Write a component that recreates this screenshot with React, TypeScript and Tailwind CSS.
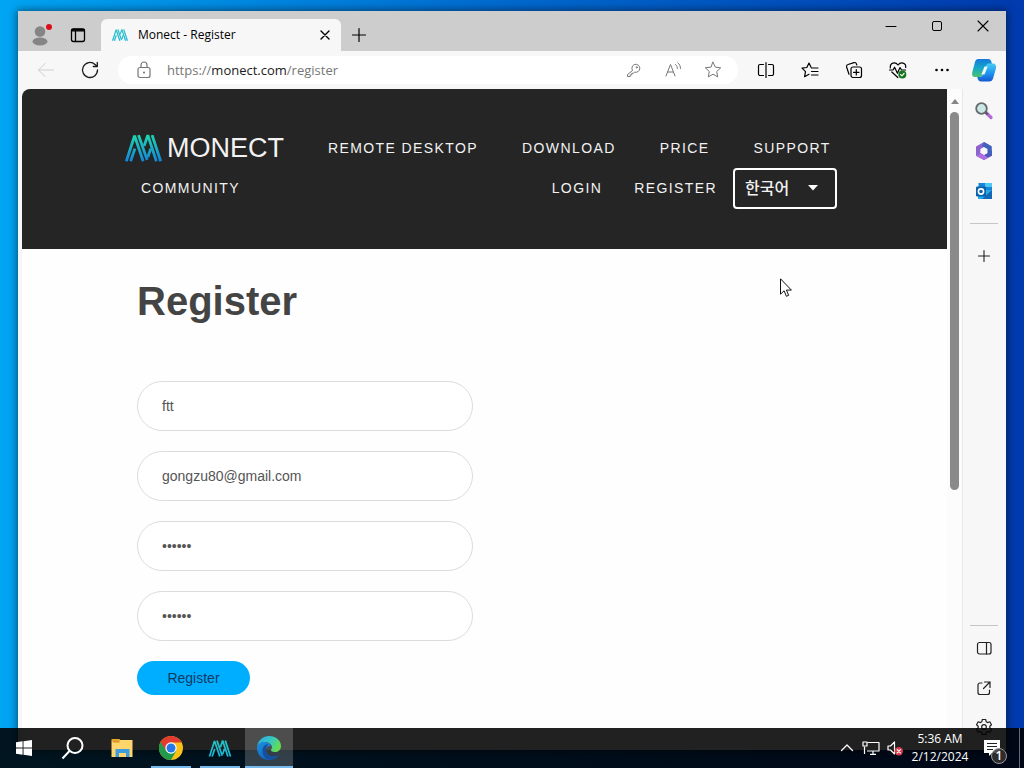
import React from "react";
import type { ReactNode } from "react";

type IconProps = { className?: string };

function MonectMark({ className = "", id, flat = false }: IconProps & { id: string; flat?: boolean }) {
  return (
    <svg viewBox="0 0 112 84" className={className} fill="none" aria-hidden="true">
      <defs>
        <linearGradient id={id} x1="0" y1="0" x2="0" y2="84" gradientUnits="userSpaceOnUse">
          <stop offset="0" stopColor={flat ? "#25c3c9" : "#1fd9ae"} />
          <stop offset="1" stopColor={flat ? "#1cb6d6" : "#1284dc"} />
        </linearGradient>
      </defs>
      <g stroke={`url(#${id})`} strokeWidth="8.5" strokeLinejoin="bevel">
        <path d="M4 82 29 5 55 82" />
        <path d="M17 82 30 44" />
        <path d="M41 3 67 78" />
        <path d="M58 36 69 3 95 82" />
        <path d="M69 70 78 44" />
        <path d="M82 3 108 82" />
      </g>
    </svg>
  );
}

function Line({ className = "", children, width = 1 }: IconProps & { children: ReactNode; width?: number }) {
  return (
    <svg
      viewBox="0 0 20 20"
      className={`size-5 ${className}`}
      fill="none"
      stroke="currentColor"
      strokeWidth={width}
      strokeLinecap="round"
      strokeLinejoin="round"
      aria-hidden="true"
    >
      {children}
    </svg>
  );
}

function IconButton({ label, className = "", children }: { label: string; className?: string; children: ReactNode }) {
  return (
    <button type="button" aria-label={label} className={`flex shrink-0 items-center justify-center ${className}`}>
      {children}
    </button>
  );
}

const plus = <path d="M10 3.5v13M3.5 10h13" />;
const star = "M10 2.2l2.3 4.9 5.4.7-4 3.7 1 5.4-4.7-2.7-4.7 2.7 1-5.4-4-3.7 5.4-.7z";

function TitleBar() {
  return (
    <header className="flex h-10 shrink-0 bg-[#cdcdcd] text-black">
      <div className="flex w-[83px] shrink-0 items-end gap-3 pb-1 pl-3">
        <button type="button" aria-label="Profile" className="size-6">
          <svg viewBox="0 0 24 24" className="size-6" aria-hidden="true">
            <circle cx="10" cy="8.500" r="5.300" fill="#858585" />
            <ellipse cx="10" cy="18.500" rx="7.500" ry="4" fill="#858585" />
            <circle cx="19" cy="4" r="3" fill="#d9101c" />
          </svg>
        </button>
        <IconButton label="Tab actions" className="size-6">
          <Line width={1.3}>
            <rect x="3.500" y="4" width="13" height="12.500" rx="2" />
            <path d="M3.500 5.800h13M7.500 6v10" />
            <path d="M4 4.800h12" strokeWidth="2" />
          </Line>
        </IconButton>
      </div>
      <div className="mt-2 flex w-60 items-center rounded-t-md bg-[#f7f7f7] pr-1.5 pl-[11px]">
        <MonectMark id="tab-mark" flat className="h-3 w-4" />
        <span className="ml-2.5 flex-1 text-xs whitespace-nowrap">Monect - Register</span>
        <IconButton label="Close tab" className="size-5">
          <Line width={1.4}>
            <path d="M6 6l8 8M14 6l-8 8" />
          </Line>
        </IconButton>
      </div>
      <IconButton label="New tab" className="mt-2 w-9">
        <Line width={1.2}>{plus}</Line>
      </IconButton>
      <div className="ml-auto flex h-[30px]">
        <IconButton label="Minimize" className="w-[46px]">
          <Line><path d="M5 10.500h10" /></Line>
        </IconButton>
        <IconButton label="Maximize" className="w-[46px]">
          <Line><rect x="5.500" y="5.500" width="9" height="9" rx="1.500" /></Line>
        </IconButton>
        <IconButton label="Close" className="w-[46px]">
          <Line width={1.1}><path d="M5 5l10 10M15 5L5 15" /></Line>
        </IconButton>
      </div>
    </header>
  );
}

function CopilotIcon() {
  return (
    <svg viewBox="0 0 26 26" className="size-6.5" aria-hidden="true">
      <defs>
        <linearGradient id="cp-a" x1="0" y1="0" x2="0" y2="1">
          <stop offset="0" stopColor="#1577dc" />
          <stop offset=".5" stopColor="#16a8c9" />
          <stop offset="1" stopColor="#4bc26e" />
        </linearGradient>
        <linearGradient id="cp-b" x1="0" y1="0" x2="0" y2="1">
          <stop offset="0" stopColor="#45cdf4" />
          <stop offset=".6" stopColor="#1b8dec" />
          <stop offset="1" stopColor="#1457d0" />
        </linearGradient>
      </defs>
      <path d="M7.500 2h9.500c2.500 0 3.300 1.500 4 5l-5 1-4 9.500c-.700 1.500-1.500 2.500-3.500 2.500H4C1.500 20 .500 18 1.300 15L4 5C4.500 3 5.500 2 7.500 2z" fill="url(#cp-a)" />
      <path d="M17.500 6.500H22c2.500 0 3.600 2 2.900 5L22.200 21c-.600 2.500-2 3.500-4 3.500h-8C8 24.500 7 23 6.200 20h2.500c2 0 2.600-1 3.200-2.500L15.200 8.500c.500-1.300 1-2 2.300-2z" fill="url(#cp-b)" />
      <path d="M13.500 9.500h3.200l-3.200 8h-3.200z" fill="#eefaff" />
    </svg>
  );
}

function Toolbar() {
  return (
    <div className="flex h-[38px] shrink-0 items-center bg-[#f7f7f7] text-[#1b1b1b]">
      <IconButton label="Back" className="ml-1.5 w-11 text-[#cfcfcf]">
        <Line><path d="M17.500 10h-15M9 3.500L2.500 10 9 16.500" /></Line>
      </IconButton>
      <IconButton label="Refresh" className="w-11">
        <Line width={1.3}>
          <path d="M17.500 10a7.500 7.500 0 1 1-2.500-5.600L17 6.300M17.300 2.500v4h-4" />
        </Line>
      </IconButton>
      <div className="ml-1.5 flex h-7 min-w-0 flex-1 items-center rounded-full bg-white text-[#767676]">
        <IconButton label="Site information" className="ml-4 size-5">
          <Line width={1.2}>
            <rect x="4" y="7.500" width="12" height="10" rx="2" />
            <path d="M7 7.500V5a3 3 0 0 1 6 0v2.500" />
            <circle cx="10" cy="12.500" r=".5" fill="currentColor" />
          </Line>
        </IconButton>
        <span className="ml-[13px] flex-1 pt-0.5 text-[13px] whitespace-nowrap">
          https://<span className="text-[#1b1b1b]">monect.com</span>/register
        </span>
        <IconButton label="Password manager" className="w-10">
          <Line>
            <path d="M9.300 10.200a4 4 0 1 1 2.300 1.900l-1.200 1.200H8.800v1.600H7.200v1.600H4.500V15z" />
            <circle cx="13.700" cy="7.300" r=".6" />
          </Line>
        </IconButton>
        <IconButton label="Read aloud" className="w-10">
          <Line>
            <path d="M3 16L7.500 4.500 12 16M4.600 12h5.800M12.500 4.500c1.300 1 1.900 2.500 1.900 4M14.800 2.800c1.800 1.500 2.700 3.500 2.700 5.700" />
          </Line>
        </IconButton>
        <IconButton label="Add to favorites" className="mr-[5px] w-10">
          <Line><path d={star} /></Line>
        </IconButton>
      </div>
      <div className="ml-1.5 flex text-black">
        <IconButton label="Split screen" className="w-11">
          <Line width={1.2}>
            <path d="M7.500 4.500H4A1.500 1.500 0 0 0 2.500 6v8A1.500 1.500 0 0 0 4 15.500h3.500M12.500 4.500H16A1.500 1.500 0 0 1 17.500 6v8a1.500 1.500 0 0 1-1.500 1.500h-3.500M10 2.500v15" />
          </Line>
        </IconButton>
        <IconButton label="Favorites" className="w-11">
          <Line width={1.2}>
            <path d="M11 7.200L9 3 6.800 7.500 2 8.200l3.500 3.500-.9 5L9 14.300M11.500 8h6.500M11.500 11.500h6.500M11.500 15h6.500" />
          </Line>
        </IconButton>
        <IconButton label="Collections" className="w-11">
          <Line width={1.2}>
            <rect x="7" y="7" width="10.500" height="10.500" rx="2" />
            <path d="M12.300 9.500v5.500M9.500 12.300H15M5 14.200L2.600 7A2 2 0 0 1 4 4.500l6-1.900a2 2 0 0 1 2.500 1.400l.3 1" />
          </Line>
        </IconButton>
        <IconButton label="Browser essentials" className="w-11">
          <Line width={1.2}>
            <path d="M2.300 8c-.600-5.500 5-6.500 7.700-3 2.700-3.500 8.300-2.500 7.700 2.500M3.800 12l6 5.500M1.500 10H5l1.600-2.800 2.800 6L12 7.500 13.500 10h4" />
            <circle cx="14.300" cy="14.500" r="4" fill="#16761c" stroke="none" />
            <path d="M12.600 14.600l1.300 1.200 2.200-2.400" stroke="#fff" />
          </Line>
        </IconButton>
        <IconButton label="Settings and more" className="w-11">
          <Line>
            <g fill="currentColor" stroke="none">
              <circle cx="4.500" cy="10" r="1.300" />
              <circle cx="10" cy="10" r="1.300" />
              <circle cx="15.500" cy="10" r="1.300" />
            </g>
          </Line>
        </IconButton>
      </div>
      <IconButton label="Copilot" className="w-[42px] pr-0.5">
        <CopilotIcon />
      </IconButton>
    </div>
  );
}

function SiteHeader() {
  return (
    <div className="h-40 shrink-0 bg-[#252525] px-[103px] pt-[39px] text-[#f2f2f2]">
      <nav aria-label="Main" className="flex max-w-[712px] flex-wrap text-sm tracking-widest whitespace-nowrap">
        <div className="flex h-10 w-full items-center gap-x-11">
          <a href="#home" className="flex items-center gap-[5px] text-[27px] tracking-normal">
            <MonectMark id="site-mark" className="h-7 w-[37px]" />
            MONECT
          </a>
          <a href="#remote">REMOTE DESKTOP</a>
          <a href="#download">DOWNLOAD</a>
          <a href="#price">PRICE</a>
          <a href="#support">SUPPORT</a>
        </div>
        <div className="flex h-10 w-full items-center">
          <a href="#community" className="mr-auto ml-4">COMMUNITY</a>
          <a href="#login" className="mr-8">LOGIN</a>
          <a href="#register" className="mr-4">REGISTER</a>
          <div className="grid h-[41px] w-26 shrink-0 items-center tracking-normal">
            <select
              aria-label="Language"
              className="col-start-1 row-start-1 h-full w-full appearance-none rounded-sm border-2 border-white bg-transparent pt-0.5 pl-2.5 text-base font-medium"
            >
              <option>한국어</option>
            </select>
            <svg viewBox="0 0 12 6" className="pointer-events-none col-start-1 row-start-1 mr-[18px] h-1.5 w-3 justify-self-end" aria-hidden="true">
              <path d="M1 0h10L6 5.500z" fill="#fff" />
            </svg>
          </div>
        </div>
      </nav>
    </div>
  );
}

const fields = [
  { label: "Name", type: "text", value: "ftt" },
  { label: "Email", type: "email", value: "gongzu80@gmail.com" },
  { label: "Password", type: "password", value: "secret" },
  { label: "Confirm password", type: "password", value: "secret" },
];

function RegisterForm() {
  return (
    <main className="px-[115px] pt-7">
      <h1 className="text-[40px] leading-12 font-bold text-[#444]">Register</h1>
      <form className="mt-14 flex max-w-[336px] flex-col items-start gap-5">
        {fields.map((f) => (
          <input
            key={f.label}
            type={f.type}
            aria-label={f.label}
            defaultValue={f.value}
            className="h-[50px] w-full rounded-full border border-[#dcdcdc] bg-white px-6 text-sm text-[#555]"
          />
        ))}
        <button type="button" className="h-[34px] w-[113px] rounded-full bg-[#00aeff] text-sm text-[#123a63]">
          Register
        </button>
      </form>
    </main>
  );
}

function Sidebar() {
  return (
    <aside className="flex w-11 shrink-0 flex-col items-center border-l border-[#e9e9e9] bg-[#f7f7f7] pt-0.5 pr-px text-[#222]">
      <IconButton label="Search" className="h-10 w-full">
        <svg viewBox="0 0 20 20" className="size-5" aria-hidden="true">
          <path d="M12 11.500l5 5" stroke="#b36ad8" strokeWidth="3.200" strokeLinecap="round" />
          <path d="M11 11l2.500 2.500" stroke="#555" strokeWidth="2" />
          <circle cx="7.500" cy="7.500" r="5.300" fill="#cbe7e6" stroke="#656b6c" strokeWidth="1.800" />
        </svg>
      </IconButton>
      <IconButton label="Microsoft 365" className="h-10 w-full">
        <svg viewBox="0 0 20 20" className="size-5" aria-hidden="true">
          <path d="M10 1L17.500 5.300v5L13.500 8 10 6 6.500 8v5L2 14.700V5.500z" fill="#8e62cf" />
          <path d="M2 14.700L7 12l3 2 3.500-2V7.800l4.500 2.400v4.500L10 19z" fill="#4f55bd" />
          <path d="M10 1l7.500 4.300L18 14l-4.500-2V7.800L8 5z" fill="#3e63bd" />
          <path d="M2 14.700L7 12l3.500 2.200L14 16.700 10 19z" fill="#b06ee0" />
          <path d="M10 6.500l3.300 1.800v3.600L10 13.800l-3.300-1.900V8.300z" fill="#f7f7f7" />
        </svg>
      </IconButton>
      <IconButton label="Outlook" className="h-10 w-full">
        <svg viewBox="0 0 20 20" className="size-5" aria-hidden="true">
          <rect x="4.500" y="2" width="13.500" height="8" fill="#1684d8" />
          <rect x="11" y="2" width="7" height="4" fill="#4cc6f5" />
          <path d="M4 9h14v9H4z" fill="#2aa7e8" />
          <path d="M18 9v9H8z" fill="#1268b4" />
          <rect x="2" y="5.500" width="10" height="10" rx="1.200" fill="#0963ac" />
          <circle cx="7" cy="10.500" r="2.600" fill="none" stroke="#fff" strokeWidth="1.600" />
        </svg>
      </IconButton>
      <hr className="mt-3 w-7 border-[#c6c6c6]" />
      <IconButton label="Customize" className="mt-3 h-10 w-full">
        <Line width={1.1}><path d="M10 4.500v11M4.500 10h11" /></Line>
      </IconButton>
      <hr className="mt-auto w-7 border-[#c6c6c6]" />
      <IconButton label="Hide sidebar" className="mt-0.5 h-10 w-full">
        <Line width={1.2}>
          <rect x="3.500" y="4.500" width="13.500" height="11.500" rx="2" />
          <path d="M12.500 4.500V16" />
        </Line>
      </IconButton>
      <IconButton label="Open link" className="h-10 w-full">
        <Line width={1.2}>
          <path d="M8 5H6a2 2 0 0 0-2 2v7.500a2 2 0 0 0 2 2h7.500a2 2 0 0 0 2-2V12M10.500 4H16v5.500M16 4l-6.500 6.500" />
        </Line>
      </IconButton>
      <IconButton label="Settings" className="h-[42px] w-full pb-1">
        <Line width={1.2}>
          <circle cx="10" cy="10" r="2.300" />
          <path d="M8.300 2.500h3.400l.5 2.300 1.300.8 2.300-.8 1.700 3-1.700 1.500v1.500l1.700 1.500-1.700 3-2.300-.8-1.300.8-.5 2.200H8.300l-.5-2.200-1.300-.8-2.300.8-1.700-3 1.700-1.500V9.300L2.500 7.800l1.700-3 2.300.8 1.300-.8z" />
        </Line>
      </IconButton>
    </aside>
  );
}

function TaskButton({ label, className = "w-12 border-transparent", children }: { label: string; className?: string; children: ReactNode }) {
  return (
    <button type="button" aria-label={label} className={`flex items-center justify-center border-b-2 pt-0.5 ${className}`}>
      {children}
    </button>
  );
}

function Taskbar() {
  return (
    <footer className="absolute inset-x-0 bottom-0 flex h-10 bg-black/87 text-white">
      <div className="flex gap-px">
        <TaskButton label="Start">
          <svg viewBox="0 0 16 16" className="size-4" fill="#fff" aria-hidden="true">
            <path d="M0 2.200L6.600 1.300v6.200H0zM7.500 1.200L16 0v7.500H7.500zM0 8.500h6.600v6.200L0 13.800zM7.500 8.500H16V16l-8.500-1.200z" />
          </svg>
        </TaskButton>
        <TaskButton label="Search">
          <svg viewBox="0 0 24 24" className="size-6" fill="none" stroke="#fff" strokeWidth="2" aria-hidden="true">
            <circle cx="14" cy="9.500" r="7.500" />
            <path d="M8.700 14.800L1.500 22.500" />
          </svg>
        </TaskButton>
        <TaskButton label="File Explorer">
          <svg viewBox="0 0 24 24" className="size-6" aria-hidden="true">
            <path d="M1.500 3h8l2 3h-10z" fill="#e8a629" />
            <path d="M1.500 5.500h7l2-1.500h12v17h-21z" fill="#ffd66b" />
            <path d="M3 5h6l1 1.500H3z" fill="#d8922a" />
            <path d="M5.500 13h14v8H16v-4H9v4H5.500z" fill="#3e9bdd" />
          </svg>
        </TaskButton>
        <TaskButton label="Chrome" className="mx-1 w-10 border-[#76b9ed]">
          <svg viewBox="0 0 24 24" className="size-6" aria-hidden="true">
            <circle cx="12" cy="12" r="12" fill="#fbc116" />
            <path d="M12 12L1.600 6A12 12 0 0 0 12 24l5.200-9z" fill="#229a4b" />
            <path d="M12 6.500h10.600L22.400 6A12 12 0 0 0 1.600 6l5.600 9z" fill="#e33b2e" />
            <circle cx="12" cy="12" r="5.700" fill="#fff" />
            <circle cx="12" cy="12" r="4.500" fill="#2878e8" />
          </svg>
        </TaskButton>
        <TaskButton label="Monect" className="mx-1 w-10 border-[#76b9ed]">
          <MonectMark id="task-mark" flat className="h-[17px] w-6" />
        </TaskButton>
        <TaskButton label="Edge" className="w-12 border-[#76b9ed] bg-white/20">
          <svg viewBox="0 0 24 24" className="size-6" aria-hidden="true">
            <defs>
              <linearGradient id="edge-a" x1="0" y1="0" x2="1" y2=".4">
                <stop offset="0" stopColor="#2ba7e3" />
                <stop offset=".6" stopColor="#36c8c5" />
                <stop offset="1" stopColor="#63db52" />
              </linearGradient>
              <linearGradient id="edge-b" x1="0" y1="0" x2=".6" y2="1">
                <stop offset="0" stopColor="#1b91de" />
                <stop offset="1" stopColor="#1360bd" />
              </linearGradient>
            </defs>
            <path d="M0 11C1 4 6 0 12 0c7 0 12 4.500 12 10 0 4-3 6-6 6-3 0-4-1-4-2 0-.700 1-1 1-3C15 8 11 6 7.500 6 3.500 6 1 8.500 0 11z" fill="url(#edge-a)" />
            <path d="M0 12c0-4 4-6.500 8-6 3 .400 6 2 6.500 4.500C13.500 9.500 9 10 9 14.500c0 4 3.500 6 7 6 3 0 4-1 5.500-1.500C19.500 22.500 16 24 12 24 5 24 0 18.500 0 12z" fill="url(#edge-b)" />
            <path d="M5.500 15c0-4 2.500-7 6-7-2 1.500-2.500 4-2.500 6.500 0 4 3.500 6 7 6 3 0 4-1 5.500-1.500-2 3-5 4.500-8 4.700-5 0-8-4.200-8-8.700z" fill="#1550a0" />
          </svg>
        </TaskButton>
      </div>
      <div className="ml-auto flex items-center">
        <IconButton label="Hidden icons" className="w-6">
          <Line width={1.3}><path d="M4.500 12.500L10 7l5.500 5.500" /></Line>
        </IconButton>
        <IconButton label="Network" className="w-6">
          <Line width={1.2}>
            <path d="M6.500 4.500H18V13H6M3.500 8.500V16M12 13v3M9 16.300h6" strokeLinecap="butt" />
            <rect x="2" y="4" width="4" height="4" />
          </Line>
        </IconButton>
        <IconButton label="Volume muted" className="w-6">
          <Line width={1.2}>
            <path d="M3 8h2.500L9.500 4v12l-4-4H3z" />
            <circle cx="13.800" cy="13.200" r="4.200" fill="#d83b4b" stroke="none" />
            <path d="M12.200 11.600l3.200 3.200M15.400 11.600l-3.200 3.200" />
          </Line>
        </IconButton>
        <time className="w-[66px] text-center text-xs leading-[18px]">
          5:36 AM
          <br />
          2/12/2024
        </time>
        <button type="button" aria-label="Notifications, 1 new" className="relative ml-2.5 size-6">
          <svg viewBox="0 0 24 24" className="size-6" aria-hidden="true">
            <path d="M1 4h16v13H9l-3 3v-3H1z" fill="#fff" />
            <path d="M4 7.500h10M4 10.500h10M4 13.500h6" stroke="#222" />
          </svg>
          <span className="absolute right-0 -bottom-1 flex size-4 items-center justify-center rounded-full border border-[#999] bg-[#333d] text-xs font-semibold">
            1
          </span>
        </button>
        <span className="mr-1 ml-3 h-full w-px bg-white/40" />
      </div>
    </footer>
  );
}

export default function App() {
  return (
    <div className="relative flex h-screen min-h-[600px] flex-col overflow-hidden bg-linear-to-r from-[#00a5f3] via-[#0069cf] to-[#003aae] px-[18px] pt-[11px] pb-[18px] font-['Open_Sans','Noto_Sans_CJK_KR',sans-serif]">
      <div className="flex min-h-0 flex-1 flex-col shadow-[0_0_8px_1px_rgb(0_0_0/0.5)]">
        <TitleBar />
        <Toolbar />
        <div className="flex min-h-0 flex-1 bg-[#f7f7f7] pl-1">
          <div className="min-w-0 flex-1 overflow-hidden rounded-tl-lg bg-[#fefefe] font-['Liberation_Sans','Noto_Sans_CJK_KR',sans-serif]">
            <SiteHeader />
            <RegisterForm />
          </div>
          <div className="flex w-[15px] shrink-0 flex-col items-center bg-[#fcfcfc] pt-2.5">
            <svg viewBox="0 0 8 5" className="h-[5px] w-2" aria-hidden="true">
              <path d="M4 0l4 5H0z" fill="#858585" />
            </svg>
            <div className="mt-2 h-[58%] w-[9px] rounded-full bg-[#8a8a8a]" />
          </div>
          <Sidebar />
        </div>
      </div>
      <Taskbar />
      <svg viewBox="0 0 12 19" className="pointer-events-none absolute top-[278px] left-[780px] h-[19px] w-3" aria-hidden="true">
        <path d="M.5.8v15.400l3.600-3.400 2.300 5.500 2.300-1-2.300-5.200h5z" fill="#fff" stroke="#111" />
      </svg>
    </div>
  );
}
